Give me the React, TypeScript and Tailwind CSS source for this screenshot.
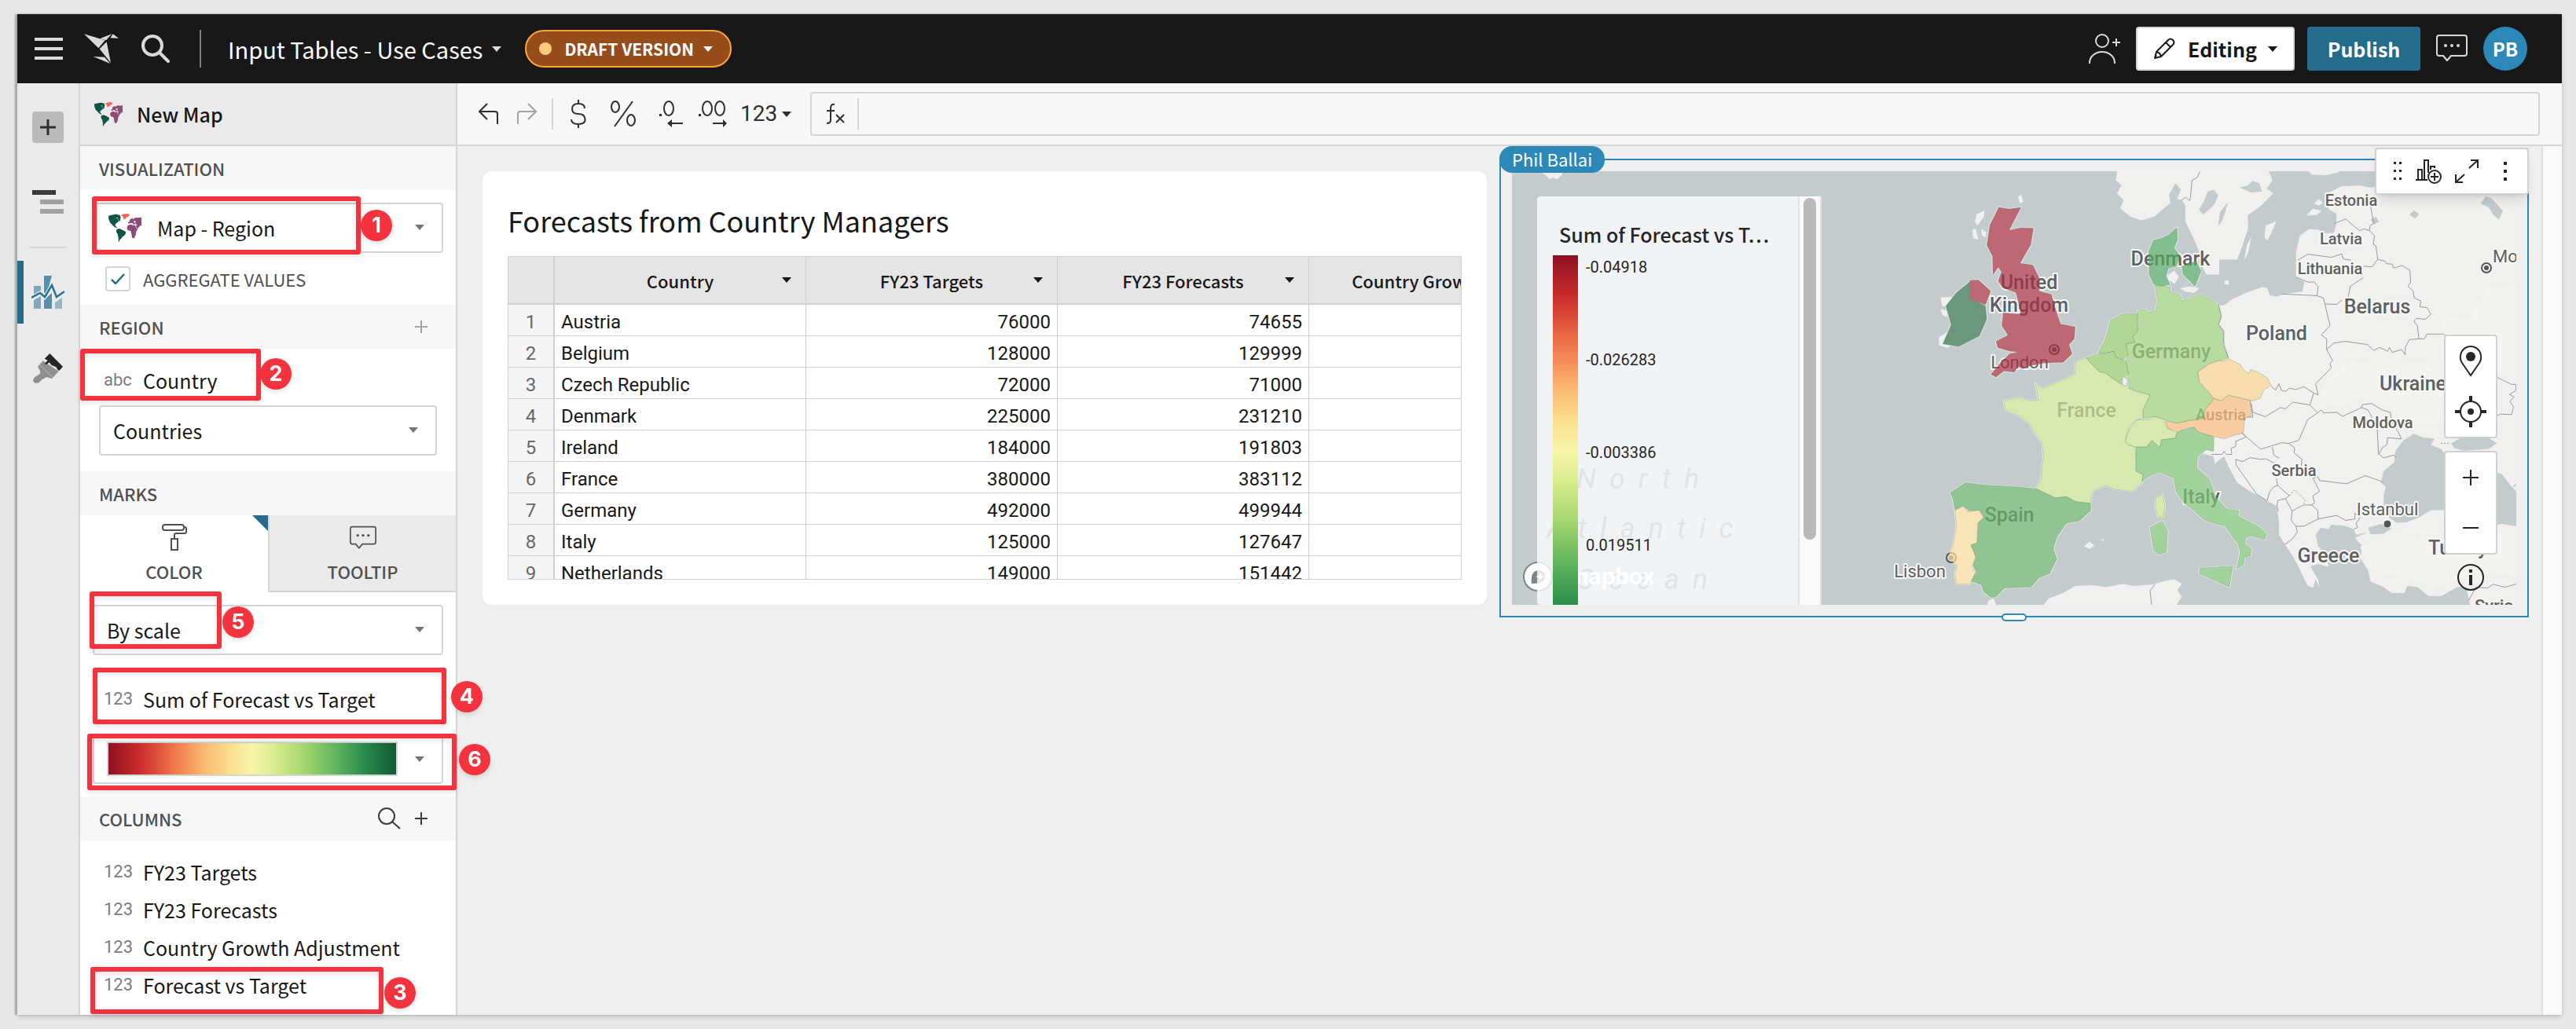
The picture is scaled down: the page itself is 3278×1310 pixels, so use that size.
import React, { useState } from "react";

const SANS = "font-['Noto_Sans_CJK_SC','Noto_Sans',sans-serif]";

/* ---------- icons ---------- */

function Caret({ className = "" }: { className?: string }) {
  return (
    <svg viewBox="0 0 12 7" className={`h-[7px] w-3 shrink-0 ${className}`} fill="currentColor" aria-hidden="true">
      <path d="M0 0h12L6 7z" />
    </svg>
  );
}

function WorldIcon({ className }: { className: string }) {
  return (
    <svg viewBox="0 0 126 108" className={`shrink-0 ${className}`} aria-hidden="true">
      <path fill="#0f5445" d="M0 8L10 6 18 4 30 2 44 6 47 16 44 22 46 26 38 30 34 34 28 38 25 44 30 50 34 55 24 52 14 42 6 34 1 22z" />
      <path fill="#fff" d="M30 16l6-2-2 6zM36 24l4-2-1 4z" />
      <path fill="#0f5445" d="M31 60L42 57 54 62 67 70 64 80 54 88 48 96 42 100 42 107 38 105 38 92 36 80 30 70z" />
      <path fill="#fb6050" d="M47 7L56 2 70 0 81 2 78 10 68 15 62 22 56 18 56 11z" />
      <path fill="#8d4a76" d="M76 38L76 31 82 30 80 24 88 18 96 20 104 14 113 16 126 14 126 48 121 44 118 50 110 58 104 48 110 42 100 40 96 42 92 36 84 36z" />
      <path fill="#fff" d="M94 31l8-3 4 5-8 1zM98 37l8 1-2 3z" />
      <path fill="#8d4a76" d="M70 54L74 45 84 41 94 44 102 44 106 56 113 57 106 68 104 82 98 94 90 92 88 78 85 66 74 64z" />
    </svg>
  );
}

function ChatIcon({ className }: { className: string }) {
  return (
    <svg viewBox="0 0 40 36" className={`shrink-0 ${className}`} fill="none" stroke="currentColor" strokeWidth="2" aria-hidden="true">
      <path d="M4 1h32a3 3 0 0 1 3 3v20a3 3 0 0 1-3 3H19l-5 6-5-6H4a3 3 0 0 1-3-3V4a3 3 0 0 1 3-3z" strokeLinejoin="round" />
      <g fill="currentColor" stroke="none">
        <circle cx="12" cy="14" r="2" />
        <circle cx="20" cy="14" r="2" />
        <circle cx="28" cy="14" r="2" />
      </g>
    </svg>
  );
}

function PlusIcon() {
  return (
    <svg viewBox="0 0 16 16" className="size-4 shrink-0" stroke="currentColor" strokeWidth="2" aria-hidden="true">
      <path d="M8 0v16M0 8h16" />
    </svg>
  );
}

/* ---------- top bar ---------- */

function TopBar() {
  return (
    <header className="flex h-[88px] shrink-0 items-center bg-[#181818] pr-11 pl-[22px] text-white">
      <button aria-label="Menu" className="flex w-9 flex-col gap-2">
        <span className="h-1 bg-[#d9d9d9]" />
        <span className="h-1 bg-[#d9d9d9]" />
        <span className="h-1 bg-[#d9d9d9]" />
      </button>
      <button aria-label="Home" className="ml-[26px]">
        <svg viewBox="258 66 138 120" className="h-10 w-[46px]" fill="#d9d9d9">
          <path d="M261 70l80 24-25 30z" />
          <path d="M321 88l45-18-21 24z" />
          <path d="M371 70l22 16-32-1z" />
          <path d="M320 127l27-27 16 80z" />
          <path d="M296 156l43 2 22 25z" />
        </svg>
      </button>
      <button aria-label="Search" className="ml-7">
        <svg viewBox="0 0 36 36" className="size-9" fill="none" stroke="#d9d9d9" strokeWidth="4">
          <circle cx="14" cy="14" r="12" />
          <path d="M23 23l11 11" strokeLinecap="round" />
        </svg>
      </button>
      <div className="ml-[38px] h-12 w-0.5 bg-[#7d7d7d]" />
      <button className="ml-[34px] flex items-center gap-3 text-[29px] leading-10 whitespace-nowrap">
        Input Tables - Use Cases
        <Caret className="text-[#d9d9d9]" />
      </button>
      <button className="ml-[30px] flex h-12 items-center rounded-full border-2 border-[#fba636] bg-[#964d1b] pr-[22px] pl-4 text-[21px] leading-8 font-bold whitespace-nowrap">
        <span className="mr-4 size-4 rounded-full bg-[#fecb7e]" />
        DRAFT VERSION
        <Caret className="ml-3" />
      </button>
      <div className="flex-1" />
      <button aria-label="Share" className="mr-5">
        <svg viewBox="0 0 40 38" className="h-[38px] w-10" fill="none" stroke="#d9d9d9" strokeWidth="2">
          <circle cx="17" cy="9" r="8" />
          <path d="M1 38v-1a16 14 0 0 1 32 0v1M30 11h10M35 6v10" />
        </svg>
      </button>
      <button className="flex h-14 w-[202px] items-center justify-center rounded border-2 border-[#d5d5d5] bg-white text-[25px] leading-9 font-bold text-[#181818]">
        <svg viewBox="0 0 28 28" className="mr-4 size-7" fill="none" stroke="currentColor" strokeWidth="2" strokeLinejoin="round" aria-hidden="true">
          <path d="M2 26l2-8L19 3q3-3 6 0t0 6L10 24zM16 6l6 6M4 18q5 1 6 6M2 26l2-4" />
        </svg>
        Editing
        <Caret className="ml-3.5" />
      </button>
      <button className="ml-4 h-14 w-36 rounded bg-[#256b8b] text-[25px] leading-9 font-bold">Publish</button>
      <button aria-label="Comments" className="ml-5 text-[#d9d9d9]">
        <ChatIcon className="h-9 w-10" />
      </button>
      <button className="ml-5 size-14 rounded-full bg-[#2c88b7] text-2xl font-bold">PB</button>
    </header>
  );
}

/* ---------- rail ---------- */

function Rail() {
  return (
    <nav className="flex w-20 shrink-0 flex-col items-center border-r-2 border-[#d5d5d5] bg-[#eaeaea] pt-9">
      <button aria-label="Add element" className="flex size-10 items-center justify-center rounded bg-[#bababa]">
        <svg viewBox="0 0 20 20" className="size-5" stroke="#2f2f2f" strokeWidth="3">
          <path d="M10 0v20M0 10h20" />
        </svg>
      </button>
      <button aria-label="Page outline" className="mt-[60px]">
        <svg viewBox="0 0 40 30" className="h-[30px] w-10">
          <path fill="#3b3b3b" d="M0 0h30v6H0z" />
          <path fill="#a2a2a2" d="M10 12h30v6H10zM10 24h30v6H10z" />
        </svg>
      </button>
      <div className="mt-[42px] h-0.5 w-[46px] bg-[#d5d5d5]" />
      <button aria-label="Element properties" className="mt-4 flex h-20 w-full items-center justify-center border-l-8 border-[#256b8b] pr-2">
        <svg viewBox="0 0 42 42" className="size-[42px]">
          <path fill="#80a8bd" d="M3 13h9v10l-9 4zM3 31l9-5v16H3z" />
          <path fill="#578fa9" d="M16 0h10l-4 14-4 8h-2zM16 31l10-9v20H16z" />
          <path fill="#97b6c4" d="M30 34l9-6v14h-9z" />
          <path fill="none" stroke="#eaeaea" strokeWidth="5" d="M0 28l11-6 6 5 9-14 6 14 10-7" />
          <path fill="none" stroke="#2a7198" strokeWidth="2.5" d="M0 28l11-6 6 5 9-15 6 15 10-7" />
        </svg>
      </button>
      <button aria-label="Theme" className="mt-[38px]">
        <svg viewBox="0 0 114 114" className="size-[38px]">
          <path fill="#8f8f8f" d="M18 50L38 28 98 68 72 96 52 90 34 100 22 112 8 114 0 104 4 92 26 78 28 68z" />
          <path fill="#262626" d="M64 0L114 50 100 66 94 62 88 52 70 44 62 34 52 42 44 40 56 26 44 20z" />
          <path stroke="#d5d5d5" strokeWidth="2" d="M26 44L76 92" />
        </svg>
      </button>
    </nav>
  );
}

/* ---------- side panel ---------- */

function SectionHeader({ title, children }: { title: string; children?: React.ReactNode }) {
  return (
    <div className="flex h-14 shrink-0 items-center bg-[#f7f7f7] pr-9 pl-6 text-[22px] leading-8 font-medium text-[#505050]">
      <h2>{title}</h2>
      <div className="ml-auto flex items-center gap-[18px] text-[#3b3b3b]">{children}</div>
    </div>
  );
}

function SelectBox({ label, options, className = "" }: { label: string; options: string[]; className?: string }) {
  return (
    <div className="relative">
      <select
        aria-label={label}
        className={`block h-16 w-full appearance-none rounded border-2 border-[#d5d5d5] bg-white text-[25px] leading-9 text-[#181818] ${className}`}
      >
        {options.map((o) => (
          <option key={o}>{o}</option>
        ))}
      </select>
      <Caret className="pointer-events-none absolute top-7 right-6 text-[#757575]" />
    </div>
  );
}

function FieldRow({ type, name }: { type: string; name: string }) {
  return (
    <button className="flex h-12 w-full items-center text-left">
      <span className="w-[50px] font-[Roboto,sans-serif] text-[22px] leading-8 text-[#7d7d7d]">{type}</span>
      <span className="text-[25px] leading-9 text-[#181818]">{name}</span>
    </button>
  );
}

function Callout({ n, box, badge }: { n: number; box: string; badge: string }) {
  return (
    <>
      <div className={`pointer-events-none absolute rounded-[3px] border-[6px] border-[#f5333f] drop-shadow-md ${box}`} />
      <div className={`pointer-events-none absolute flex size-10 items-center justify-center rounded-full bg-[#f5333f] font-[Inter,sans-serif] text-[27px] leading-8 font-bold text-white drop-shadow-md ${badge}`}>
        {n}
      </div>
    </>
  );
}

function SidePanel() {
  const [aggregate, setAggregate] = useState(true);
  return (
    <aside className="relative flex w-[480px] shrink-0 flex-col border-r-2 border-[#d5d5d5] bg-white">
      <div className="flex h-20 shrink-0 items-center gap-[18px] border-b-2 border-[#d5d5d5] bg-[#eaeaea] pl-[18px]">
        <WorldIcon className="h-[31px] w-9" />
        <h1 className="text-[25px] leading-9 font-medium text-[#181818]">New Map</h1>
      </div>

      <SectionHeader title="VISUALIZATION" />
      <div className="px-4 pt-4 pb-[17px]">
        <div className="relative">
          <SelectBox label="Visualization type" options={["Map - Region", "Map - Point"]} className="pl-20" />
          <WorldIcon className="pointer-events-none absolute top-3.5 left-5 h-9 w-[42px]" />
        </div>
        <label className="mt-[17px] flex items-center gap-4 pl-4 text-[22px] leading-8 text-[#505050]">
          <span className="relative size-8">
            <input
              type="checkbox"
              checked={aggregate}
              onChange={(e) => setAggregate(e.target.checked)}
              className="block size-8 appearance-none rounded border-2 border-[#d5d5d5] bg-white"
            />
            {aggregate && (
              <svg viewBox="0 0 18 14" className="pointer-events-none absolute top-[9px] left-[7px] h-3.5 w-[18px]" fill="none" stroke="#256b8b" strokeWidth="2.5">
                <path d="M1 8l5 5L17 1" />
              </svg>
            )}
          </span>
          AGGREGATE VALUES
        </label>
      </div>

      <SectionHeader title="REGION">
        <button aria-label="Add region" className="text-[#a2a2a2]">
          <PlusIcon />
        </button>
      </SectionHeader>
      <div className="px-6 pt-4 pb-5">
        <div className="pb-2 pl-1.5">
          <FieldRow type="abc" name="Country" />
        </div>
        <SelectBox label="Region type" options={["Countries", "States"]} className="pl-4" />
      </div>

      <SectionHeader title="MARKS" />
      <div role="tablist" className="grid h-[98px] shrink-0 grid-cols-2 text-[22px] leading-8 font-medium text-[#505050]">
        <button role="tab" aria-selected="true" className="relative flex flex-col items-center gap-2.5 pt-[11px]">
          <svg viewBox="0 0 32 34" className="h-[34px] w-8" fill="none" stroke="#505050" strokeWidth="2" aria-hidden="true">
            <rect x="1" y="1" width="27" height="7" rx="3" />
            <path d="M28 4h1q2 0 2 2v4q0 2-2 2H18q-2 0-2 2v5M12 19h8v14h-8z" />
          </svg>
          COLOR
          <svg viewBox="0 0 20 20" className="absolute top-0 right-0 size-5" fill="#256b8b" aria-hidden="true">
            <path d="M0 0h20v20z" />
          </svg>
        </button>
        <button role="tab" aria-selected="false" className="flex flex-col items-center gap-2.5 border-b-2 border-l-2 border-[#d5d5d5] bg-[#eaeaea] pt-[13px]">
          <ChatIcon className="h-8 w-[34px]" />
          TOOLTIP
        </button>
      </div>
      <div className="px-4 py-4">
        <SelectBox label="Color mode" options={["By scale", "By category"]} className="pl-4" />
        <div className="pt-8 pb-5 pl-3.5">
          <FieldRow type="123" name="Sum of Forecast vs Target" />
        </div>
        <button aria-label="Color scale" aria-haspopup="listbox" className="flex h-16 w-full items-center justify-between rounded border-2 border-[#d5d5d5] pr-[22px] pl-4">
          <span className="h-11 w-[370px] border-2 border-[#d5d5d5] bg-[linear-gradient(90deg,#8f1023,#cb2d2c_11%,#ef7148_22%,#fbb871_33%,#fade8c_42%,#f7f5a9_50%,#d3ea88_59%,#a0d36c_69%,#5bb25d_80%,#25874a_90%,#125a33)]" />
          <Caret className="text-[#757575]" />
        </button>
      </div>

      <SectionHeader title="COLUMNS">
        <button aria-label="Search columns">
          <svg viewBox="0 0 30 28" className="h-7 w-[30px]" fill="none" stroke="currentColor" strokeWidth="2">
            <circle cx="12" cy="11" r="10" />
            <path d="M19 18l10 9" />
          </svg>
        </button>
        <button aria-label="Add column">
          <PlusIcon />
        </button>
      </SectionHeader>
      <ul className="pt-4 pl-[30px]">
        {["FY23 Targets", "FY23 Forecasts", "Country Growth Adjustment", "Forecast vs Target"].map((name) => (
          <li key={name}>
            <FieldRow type="123" name={name} />
          </li>
        ))}
      </ul>

      <Callout n={1} box="top-36 left-[15px] h-[74px] w-[342px]" badge="top-[161px] left-[357px]" />
      <Callout n={2} box="top-[338px] left-0 h-[66px] w-[230px]" badge="top-[350px] left-[229px]" />
      <Callout n={5} box="top-[647px] left-3 h-[73px] w-[168px]" badge="top-[666px] left-[181px]" />
      <Callout n={4} box="top-[744px] left-4 h-[72px] w-[450px]" badge="top-[761px] left-[472px]" />
      <Callout n={6} box="top-[828px] left-[9px] h-[72px] w-[470px]" badge="top-[841px] left-[482px]" />
      <Callout n={3} box="top-[1125px] left-[13px] h-[60px] w-[373px]" badge="top-[1138px] left-[387px]" />
    </aside>
  );
}

/* ---------- format toolbar ---------- */

function FormatBar() {
  return (
    <div className="flex h-20 shrink-0 items-center border-b-2 border-[#d5d5d5] bg-[#f7f7f7] pr-7 pl-[26px] text-[#2f2f2f]">
      <button aria-label="Undo">
        <svg viewBox="0 0 26 28" className="h-7 w-[26px]" fill="none" stroke="currentColor" strokeWidth="2">
          <path d="M12 1L2 11l10 10M2 11h20q3 0 3 3v13" />
        </svg>
      </button>
      <button aria-label="Redo" className="ml-6 text-[#a2a2a2]">
        <svg viewBox="0 0 26 28" className="h-7 w-[26px]" fill="none" stroke="currentColor" strokeWidth="2">
          <path d="M14 1l10 10-10 10M24 11H4q-3 0-3 3v13" />
        </svg>
      </button>
      <div className="ml-[18px] h-10 w-0.5 bg-[#d5d5d5]" />
      <button aria-label="Currency" className="ml-[22px]">
        <svg viewBox="0 0 20 36" className="h-9 w-5" fill="none" stroke="currentColor" strokeWidth="2">
          <path d="M10 0v5M10 31v5M18 11q0-6-8-6t-8 6.500 8 6.500 8.500 6.500-8.500 6.500-9-6" />
        </svg>
      </button>
      <button aria-label="Percent" className="ml-[30px]">
        <svg viewBox="0 0 34 34" className="size-[34px]" fill="none" stroke="currentColor" strokeWidth="2">
          <ellipse cx="7" cy="8" rx="5" ry="7" />
          <ellipse cx="27" cy="25" rx="5" ry="7" />
          <path d="M29 1L6 33" />
        </svg>
      </button>
      <button aria-label="Decrease decimals" className="ml-7">
        <svg viewBox="0 0 32 34" className="h-[34px] w-8" fill="none" stroke="currentColor" strokeWidth="2">
          <ellipse cx="13" cy="10" rx="6" ry="9" />
          <path d="M14 29h17" />
          <path d="M17 24v10l-6-5zM1 17h3v3H1z" fill="currentColor" stroke="none" />
        </svg>
      </button>
      <button aria-label="Increase decimals" className="ml-[18px]">
        <svg viewBox="0 0 38 34" className="h-[34px] w-[38px]" fill="none" stroke="currentColor" strokeWidth="2">
          <ellipse cx="12" cy="10" rx="6" ry="9" />
          <ellipse cx="28" cy="10" rx="6" ry="9" />
          <path d="M19 29h14" />
          <path d="M32 24v10l5-5zM1 17h3v3H1z" fill="currentColor" stroke="none" />
        </svg>
      </button>
      <button className="ml-4 flex items-center gap-1.5 font-[Roboto,sans-serif] text-[28px] leading-8">
        123
        <Caret />
      </button>
      <div className="ml-6 flex h-14 flex-1 items-center rounded border-2 border-[#d5d5d5] pl-[18px]">
        <svg viewBox="0 0 24 28" className="h-7 w-6" fill="none" stroke="currentColor" strokeWidth="2" aria-hidden="true">
          <path d="M11 2q-5-1-5 5v15q0 4-5 4M1 10h10M13 15l10 10M23 15L13 25" />
        </svg>
        <div className="ml-4 h-10 w-0.5 bg-[#d5d5d5]" />
        <input aria-label="Formula" className="h-full flex-1 bg-transparent px-4 text-2xl outline-none" />
      </div>
    </div>
  );
}

/* ---------- table ---------- */

const ROWS: [string, number, number][] = [
  ["Austria", 76000, 74655],
  ["Belgium", 128000, 129999],
  ["Czech Republic", 72000, 71000],
  ["Denmark", 225000, 231210],
  ["Ireland", 184000, 191803],
  ["France", 380000, 383112],
  ["Germany", 492000, 499944],
  ["Italy", 125000, 127647],
  ["Netherlands", 149000, 151442],
];

function ForecastCard() {
  return (
    <section className="h-[552px] rounded-xl bg-white p-8">
      <h2 className="flex h-[76px] items-center pb-4 text-[36px] leading-[52px] text-[#181818]">Forecasts from Country Managers</h2>
      <div className="h-[412px] overflow-hidden border border-[#d0d0d0]">
        <table className="w-[1339px] table-fixed border-separate border-spacing-0">
          <colgroup>
            <col className="w-[59px]" />
            <col className="w-80" />
            <col className="w-80" />
            <col className="w-80" />
            <col className="w-80" />
          </colgroup>
          <thead>
            <tr className="h-[61px] bg-[#e5e5e5] text-[22px] leading-8 text-[#181818]">
              <th className="border-r-2 border-b-2 border-[#d0d0d0]" />
              {["Country", "FY23 Targets", "FY23 Forecasts", "Country Growth A…"].map((h) => (
                <th key={h} className="relative border-r border-b-2 border-[#d0d0d0] p-0 text-center font-medium">
                  {h}
                  <Caret className="absolute top-[26px] right-[18px]" />
                </th>
              ))}
            </tr>
          </thead>
          <tbody className="font-[Roboto,sans-serif] text-2xl leading-8 text-[#181818]">
            {ROWS.map(([name, target, forecast], i) => (
              <tr key={name} className="h-10">
                <td className="border-r-2 border-b border-[#d0d0d0] bg-[#f5f5f5] p-0 pt-1 text-center text-[#686868]">{i + 1}</td>
                <td className="border-r border-b border-[#d0d0d0] px-2 pt-1 pb-0">{name}</td>
                <td className="border-r border-b border-[#d0d0d0] px-2 pt-1 pb-0 text-right">{target}</td>
                <td className="border-r border-b border-[#d0d0d0] px-2 pt-1 pb-0 text-right">{forecast}</td>
                <td className="border-b border-[#d0d0d0] p-0" />
              </tr>
            ))}
          </tbody>
        </table>
      </div>
    </section>
  );
}

/* ---------- map ---------- */

const REGIONS: [string, string][] = [
  ["#a82d42", "M256 247L280 252 307 247 280 316 306 309 335 310 329 360 305 416 334 422 348 460 348 500 376 510 384 550 397 600 430 608 428 645 416 662 423 690 403 716 360 718 330 725 310 735 300 728 292 746 268 742 250 761 238 752 262 715 280 690 300 684 280 682 254 672 250 652 277 634 263 605 266 566 307 570 300 530 295 505 265 490 255 470 262 442 255 428 243 452 242 395 229 362 236 300z"],
  ["#a82d42", "M190 468L210 466 238 500 226 542 205 530 190 528z"],
  ["#31704e", "M190 472L190 528 205 530 226 545 229 585 212 637 165 668 129 660 148 602 136 545 160 505z"],
  ["#53aa68", "M608 346L622 342 640 332 661 308 662 345 655 370 668 395 660 425 642 430 636 455 645 480 625 486 608 480 598 450 597 380z"],
  ["#53aa68", "M672 425L705 410 716 440 702 486 675 450z"],
  ["#94cc70", "M510 590L535 570 572 568 570 590 572 620 560 640 566 655 545 660 550 690 540 708 522 700 518 683 500 688 482 687 500 640z"],
  ["#94cc70", "M455 702L482 690 500 688 518 682 522 700 545 712 552 750 536 768 536 782 515 765 498 748 485 745 470 725z"],
  ["#9fd27f", "M610 482L646 488 645 503 668 510 672 530 685 525 712 510 745 530 755 545 762 575 756 602 768 625 766 665 778 702 755 712 735 720 708 745 712 775 745 825 738 840 724 860 722 885 690 892 660 900 635 890 612 880 585 885 584 860 600 815 552 795 550 745 545 712 550 690 545 660 566 655 560 640 572 620 572 560 590 555 595 565 612 560 618 530z"],
  ["#cde596", "M430 715L455 702 470 725 485 745 498 748 515 765 536 782 560 800 600 815 584 860 584 885 570 890 555 905 543 955 550 965 565 970 568 1000 568 1045 584 1055 582 1080 560 1106 520 1100 500 1088 470 1105 463 1142 432 1138 410 1122 385 1126 341 1098 352 1070 358 1000 355 960 335 925 325 900 305 880 272 862 267 832 305 822 325 832 346 830 340 780 355 795 400 770 430 752z"],
  ["#cde596", "M613 1128L628 1115 634 1150 630 1185 618 1185 612 1150z"],
  ["#cde596", "M543 955L550 925 570 890 600 888 612 880 632 888 640 915 660 930 658 945 640 948 626 950 622 975 605 952 592 972 568 972 550 965z"],
  ["#80c477", "M568 972L592 972 605 952 622 975 626 950 658 945 662 925 700 912 710 925 745 942 744 985 728 980 708 1000 706 1035 735 1070 750 1125 775 1160 802 1165 800 1180 850 1215 865 1235 860 1252 830 1240 818 1245 815 1262 830 1280 828 1302 815 1305 812 1330 797 1340 805 1290 800 1265 785 1240 770 1210 750 1205 722 1192 700 1165 680 1145 660 1110 653 1065 620 1048 598 1060 582 1076 584 1055 568 1045z"],
  ["#80c477", "M714 1338L788 1332 780 1396 712 1355z"],
  ["#80c477", "M600 1215L628 1196 640 1225 637 1290 620 1297 608 1285z"],
  ["#66b26c", "M181 1079L215 1086 300 1093 341 1098 385 1126 410 1122 432 1138 465 1142 465 1165 440 1195 410 1202 388 1245 380 1280 388 1310 372 1355 348 1368 330 1395 270 1398 250 1425 238 1427 222 1410 216 1388 193 1378 205 1350 198 1330 204 1305 193 1268 207 1262 210 1200 222 1185 212 1163 188 1165 175 1150 157 1163 152 1130 146 1110z"],
  ["#fcdea0", "M157 1163L175 1150 185 1168 212 1163 222 1185 208 1202 207 1262 193 1268 204 1305 196 1330 202 1355 190 1388 160 1386 156 1355 162 1330 140 1308 152 1270 160 1215z"],
  ["#fcbe82", "M745 825L762 832 778 815 828 832 830 880 815 885 812 930 795 935 768 947 745 940 710 928 700 912 680 915 665 928 640 915 636 892 660 900 690 892 722 885 724 860z"],
  ["#f9d493", "M708 745L735 720 755 710 768 712 778 705 805 722 812 738 825 750 828 738 845 745 866 762 875 785 858 800 850 825 832 832 778 815 762 832 745 825 712 775z"],
];

const LAND_WEST =
  "M525 138L522 165 535 180 525 205 540 225 532 250 555 275 580 286 610 275 640 240 665 222 672 225 680 240 680 290 695 330 705 360 718 400 720 430 728 450 757 450 757 405 798 405 808 370 823 310 822 270 850 245 880 205 865 190 878 165 870 138z" +
  "M358 1449L370 1430 400 1415 430 1392 470 1390 500 1396 540 1386 560 1392 605 1388 640 1375 655 1372 672 1385 662 1405 672 1425 660 1449z" +
  "M230 1449L233 1436 245 1430 250 1449zM450 1272L462 1258 474 1270 463 1280zM486 1252L496 1250 494 1256z" +
  "M300 215L307 208 312 230 304 236zM202 290L206 268 224 256 222 276 208 302zM196 315L204 312 210 345 198 340zM216 312L228 322 226 338 218 332z" +
  "M124 520L148 518 150 535 128 548zM124 555L140 560 138 580 128 572zM120 640L150 615 160 655 140 672 120 664z" +
  "M860 338L863 302 886 290 880 312 866 348zM814 408L820 360 830 336 824 380zM955 272L970 250 990 258 978 270zM972 236L984 222 992 234 984 242z" +
  "M640 452L655 438 666 458 656 478 641 466zM668 492L690 486 712 492 700 506 680 502zM768 470L778 468 780 480 770 480z" +
  "M960 138L968 148 1000 150 1030 140 1028 138z";

const LAND_EAST =
  "M0 470L80 500 150 480 215 510 240 510 270 490 330 465 385 448 405 450 415 475 440 480 475 470 540 462 547 430 515 412 515 330 530 270 565 248 600 250 625 262 660 260 668 235 670 195 640 180 632 145 635 125 690 100 760 98 800 105 830 100 860 60 1000 50 1356 50 1356 1541 1180 1541 1165 1480 1130 1480 1070 1510 1020 1510 980 1480 940 1475 930 1500 880 1500 850 1480 800 1460 790 1420 760 1380 770 1340 740 1310 790 1290 745 1300 735 1280 700 1268 650 1265 640 1280 610 1275 590 1300 600 1340 628 1370 640 1410 600 1400 570 1408 600 1455 605 1482 590 1452 580 1482 560 1475 540 1440 520 1400 500 1370 475 1335 450 1300 450 1250 440 1200 400 1180 340 1150 290 1120 255 1060 240 1030 205 1055 200 1030 140 1015 100 900z";

const LAKES =
  "M145 180L165 150 178 118 200 112 218 130 205 160 185 180 160 198zM218 236L225 190 255 155 248 180 232 222z" +
  "M300 105L330 98 350 82 375 90 386 118 345 122zM948 198L965 184 985 196 970 212zM1220 160L1240 135 1262 142 1305 185 1290 214 1270 200 1250 172z" +
  "M800 215L820 205 832 222 812 232zM55 90L75 110 60 150 40 180 30 130z" +
  "M840 1120L850 1080 890 1050 895 1010 925 975 965 952 1000 965 1045 968 1030 990 1070 1005 1110 1060 1160 1090 1200 1050 1260 1080 1300 1090 1330 1125 1356 1150 1356 1270 1300 1262 1240 1275 1180 1250 1090 1215 1030 1215 985 1240 940 1256 900 1258 870 1240 850 1200 850 1160 858 1135z" +
  "M1108 985L1140 968 1250 966 1282 985 1250 1004 1160 1010 1120 1002zM790 1275L840 1262 880 1278 850 1296 800 1298z";

const TINTS =
  "M1356 440L1250 452 1195 520 1190 560 1090 545 1060 600 1080 760 1160 800 1260 740 1356 760z" +
  "M640 760L720 700 860 720 1000 700 1080 760 1060 920 940 920 880 860 760 830 680 860 600 840z" +
  "M760 1340L900 1290 1040 1330 1200 1290 1356 1300 1356 1440 1200 1430 1060 1480 900 1440 800 1420z";

const BORDERS =
  "M148 50L138 70 118 80 112 140 108 150 95 138 78 148M662 228L705 213 757 253 775 247 795 253 815 270 810 300 820 305 827 352M800 170L812 228 798 236 795 253" +
  "M522 355L560 334 650 345 690 333 695 350 725 355M827 352L805 378 775 375M772 415L722 445 715 480M690 492L670 507 625 505" +
  "M515 413L560 430 585 430 600 445 595 477M462 471L595 477 620 485 645 580 612 612 632 625 632 662" +
  "M827 352L855 358 860 367 882 368 888 382 920 373 950 390 953 430 943 445 962 460 967 485 992 495 988 515 1015 518 1030 540 1010 558 975 555 965 565 978 580 985 625 948 628 932 655 932 680 918 662 882 672 872 655 865 668 835 655 812 665 788 645 702 634 660 640 632 662" +
  "M985 625L1005 626 1015 609 1078 609 1100 625M1283 758L1338 782 1355 782 1355 803 1330 817 1348 825 1332 840 1346 860 1338 886 1295 884 1283 890" +
  "M632 662L655 700 645 710 650 725 590 780 600 818 583 812 545 790 515 800 490 795 475 806 460 803 450 780 437 802 420 788" +
  "M583 812L568 853 503 843 475 866 455 862 398 893 350 878 340 838M568 853L598 880 560 903 525 975 487 985 460 983 380 1005 310 950" +
  "M598 880L612 870 620 880 670 878 693 892 765 862M765 862L768 852 803 848 845 870 875 878 880 910 905 945 918 970 865 965 862 990 845 1000 830 1023M765 862L790 870 825 930 830 1020 850 1035 890 1025 897 1035" +
  "M598 1100L605 1113 708 1124 780 1096 848 1118M425 998L430 1025 450 1035M487 985L510 1000 508 1018 538 1040 535 1065M598 1100L580 1105 605 1150 580 1165 585 1190 575 1197 545 1197" +
  "M430 1052L400 1038 380 1040 340 1034 310 1048 285 1040 287 1060 365 1160 405 1182 415 1150 430 1135 445 1130 440 1105M445 1130L490 1165 475 1175 445 1182 443 1200 447 1220" +
  "M475 1175L500 1218 525 1205 545 1197M500 1218L497 1250 515 1270 545 1270 600 1245 598 1215 575 1197M515 1270L520 1290 500 1315 472 1333M600 1245L670 1233 705 1250 740 1245 740 1225 760 1240 745 1260 750 1275 735 1280" +
  "M192 1023L232 1023 240 1013 250 1023 270 1023 268 1002 285 995 285 978 320 965M305 945L325 965M345 850L350 895 320 893" +
  "M1175 1525L1190 1500 1202 1480 1245 1483 1268 1470 1312 1480 1356 1469M220 508L230 550 218 575 238 597 240 645 257 690M1345 1135L1356 1125";

const LABELS: { t: string; x: number; y: number; s: string; a?: "start" | "middle" }[] = [
  { t: "Estonia", x: 1068, y: 44, s: "text-[20px] font-medium" },
  { t: "Latvia", x: 1055, y: 93, s: "text-[20px] font-medium" },
  { t: "Lithuania", x: 1041, y: 131, s: "text-[20px] font-medium" },
  { t: "Belarus", x: 1101, y: 181, s: "text-[25px] font-medium" },
  { t: "Poland", x: 973, y: 215, s: "text-[25px] font-medium" },
  { t: "Mo", x: 1248, y: 116, s: "text-[22px]", a: "start" },
  { t: "Ukraine", x: 1104, y: 279, s: "text-[25px] font-medium", a: "start" },
  { t: "Moldova", x: 1108, y: 327, s: "text-[20px] font-medium" },
  { t: "Serbia", x: 995, y: 388, s: "text-[20px] font-medium" },
  { t: "Istanbul", x: 1114, y: 438, s: "text-[22px]" },
  { t: "Greece", x: 1039, y: 498, s: "text-[25px] font-medium" },
  { t: "Turkey", x: 1166, y: 488, s: "text-[25px] font-medium", a: "start" },
  { t: "Syria", x: 1225, y: 561, s: "text-[22px] font-medium", a: "start" },
  { t: "Italy", x: 877, y: 423, s: "text-[25px] font-medium" },
  { t: "Germany", x: 839, y: 238, s: "text-[25px] font-medium" },
  { t: "France", x: 731, y: 313, s: "text-[25px] font-medium" },
  { t: "Spain", x: 633, y: 446, s: "text-[25px] font-medium" },
  { t: "Lisbon", x: 519, y: 517, s: "text-[22px]" },
  { t: "London", x: 646, y: 251, s: "text-[22px]" },
  { t: "United", x: 658, y: 150, s: "text-[25px] font-medium" },
  { t: "Kingdom", x: 658, y: 179, s: "text-[25px] font-medium" },
  { t: "Denmark", x: 838, y: 120, s: "text-[25px] font-medium" },
  { t: "Austria", x: 902, y: 317, s: "text-[20px] font-medium" },
];

const CAPITALS: [number, number][] = [
  [1240, 123],
  [559, 492],
  [690, 227],
];

function EuropeMap() {
  return (
    <svg viewBox="0 0 1278 552" preserveAspectRatio="xMidYMid slice" className="absolute inset-0 h-full w-full font-[Roboto,sans-serif]" role="img" aria-label="Map of Europe coloured by forecast vs target">
      <rect width="1278" height="552" fill="#c3cbcd" />
      <path d="M34 0l8 4 6 6 4-2 6 2 6-6V0z" fill="#f1f1ef" />
      <g fill="#f0f0ef">
        <g transform="matrix(.56 0 0 .4209 476 -58)" stroke="#f0f0ef" strokeWidth="4">
          {REGIONS.map(([, d]) => (
            <path key={d} d={d} />
          ))}
          <path d={LAND_WEST} stroke="none" />
        </g>
        <g transform="matrix(.3333 0 0 .37 826 -18)">
          <path d={LAND_EAST} />
          <path d={TINTS} fill="#f3f4ef" />
          <path d={LAKES} fill="#c3cbcd" />
          <path d={BORDERS} fill="none" stroke="#9a9a9a" vectorEffect="non-scaling-stroke" />
          <path d="M490 1165L510 1145 550 1180 545 1195M1068 985L1105 985" fill="none" stroke="#9a9a9a" strokeDasharray="2 2" vectorEffect="non-scaling-stroke" />
        </g>
      </g>
      <path d="M818 526l-6 8 2 18" fill="none" stroke="#9a9a9a" />
      <g fill="#555" stroke="#555">
        {CAPITALS.map(([x, y]) => (
          <g key={x}>
            <circle cx={x} cy={y} r="6" fill="none" strokeWidth="2" />
            <circle cx={x} cy={y} r="3" stroke="none" />
          </g>
        ))}
        <circle cx="1114" cy="449" r="4" />
      </g>
      {LABELS.map(({ t, x, y, s, a = "middle" }) => (
        <text key={t} x={x} y={y} textAnchor={a} className={s} fill="#606060" stroke="#f7f7f6" strokeWidth="4" strokeLinejoin="round" paintOrder="stroke">
          {t}
        </text>
      ))}
      <g transform="matrix(.56 0 0 .4209 476 -58)" fillOpacity=".7">
        {REGIONS.map(([fill, d]) => (
          <path key={d} d={d} fill={fill} stroke="#6b8f68" strokeOpacity=".35" vectorEffect="non-scaling-stroke" />
        ))}
        <path d="M538 758L549 768 546 788 537 782z" fill="#f0f0ef" fillOpacity="1" stroke="#a9a9a9" />
      </g>
      <g fill="#75838a" className="text-[36px] tracking-[17px] italic">
        <text x="82" y="404">North</text>
        <text x="44" y="467">Atlantic</text>
        <text x="82" y="532">Ocean</text>
      </g>
      <g>
        <circle cx="33" cy="516" r="18" fill="#fff" stroke="#7d8587" strokeWidth="2" />
        <path d="M25 525q-2-16 9-17 8 0 8 8 0 9-17 9z" fill="#7d8587" />
        <path d="M36 510l1.500 4.500L42 516l-4.500 1.500L36 522l-1.500-4.500L30 516l4.500-1.500z" fill="#fff" />
      </g>
    </svg>
  );
}

const CONTROL_BOX = "flex w-[68px] flex-col rounded border-2 border-[#d0d0d0] bg-white text-[#262626]";

function MapElement() {
  return (
    <section className="relative h-[552px]">
      <div className="absolute -inset-4 border-2 border-[#2c88b7]" />
      <div className="absolute inset-0 overflow-hidden">
        <EuropeMap />

        <div className="absolute top-8 bottom-0 left-8 flex w-[362px]">
          <div className="relative flex-1 rounded-l border-r-2 border-[#e1e3e5] bg-[#fcfcfe]/80 pt-7 pl-5">
            <span className="absolute bottom-4 left-10 font-[Inter,sans-serif] text-[28px] leading-10 font-bold text-white">mapbox</span>
            <h3 className="h-[47px] pl-2 text-[25px] leading-10 font-medium text-[#262626]">Sum of Forecast vs T…</h3>
            <div className="relative flex">
              <div className="h-[445px] w-8 bg-[linear-gradient(180deg,#8f1023,#cb2d2c_12%,#ef7148_25%,#fbb871_38%,#fade8c_47%,#f7f5a9_56%,#d3ea88_66%,#a0d36c_77%,#5bb25d_89%,#2a8d4c)]" />
              <ul className="flex flex-col pl-2.5 font-[Roboto,sans-serif] text-[20px] leading-[30px] text-[#262626]">
                <li className="h-[118px]">-0.04918</li>
                <li className="h-[118px]">-0.026283</li>
                <li className="h-[118px]">-0.003386</li>
                <li>0.019511</li>
              </ul>
            </div>
          </div>
          <div className="w-7 border-r-2 border-[#e1e3e5] bg-[#fafafa] px-[5px] pt-0.5">
            <div className="h-[435px] rounded-full bg-[#b9b9b9]" />
          </div>
        </div>

        <div className="absolute top-[208px] right-6 flex flex-col items-center">
          <div className={`h-[132px] ${CONTROL_BOX}`}>
            <button aria-label="Reset location" className="flex flex-1 items-center justify-center">
              <svg viewBox="0 0 30 40" className="h-10 w-[30px]" fill="none" stroke="currentColor" strokeWidth="2">
                <path d="M15 38L4 22Q1 17 2 14a13 13 0 0 1 26 0q1 3-2 8z" />
                <circle cx="15" cy="14" r="6" fill="currentColor" stroke="none" />
              </svg>
            </button>
            <button aria-label="Centre map" className="flex flex-1 items-center justify-center">
              <svg viewBox="0 0 40 40" className="size-10" fill="none" stroke="currentColor" strokeWidth="2">
                <circle cx="20" cy="20" r="13" />
                <circle cx="20" cy="20" r="4" fill="currentColor" stroke="none" />
                <path d="M20 0v7M20 33v7M0 20h7M33 20h7" strokeWidth="4" />
              </svg>
            </button>
          </div>
          <div className={`mt-4 h-[132px] ${CONTROL_BOX}`}>
            <button aria-label="Zoom in" className="flex flex-1 items-center justify-center">
              <svg viewBox="0 0 20 20" className="size-5" stroke="currentColor" strokeWidth="2">
                <path d="M10 0v20M0 10h20" />
              </svg>
            </button>
            <button aria-label="Zoom out" className="flex flex-1 items-center justify-center">
              <svg viewBox="0 0 20 20" className="size-5" stroke="currentColor" strokeWidth="2">
                <path d="M0 10h20" />
              </svg>
            </button>
          </div>
          <button aria-label="Map attribution" className="mt-3">
            <svg viewBox="0 0 34 34" className="size-[34px]" fill="none" stroke="#262626" strokeWidth="2">
              <circle cx="17" cy="17" r="16" />
              <path d="M17 14v13M17 7v4" strokeWidth="4" />
            </svg>
          </button>
        </div>
      </div>

      <div className="absolute -top-8 -left-4 flex h-[34px] items-center rounded-2xl bg-[#2c88b7] px-4 pb-0.5 text-[22px] leading-8 text-white">Phil Ballai</div>
      <div className="absolute -bottom-[21px] left-1/2 h-2.5 w-8 -translate-x-1/2 rounded-full border-2 border-[#2c88b7] bg-white" />

      <div className="absolute -top-[30px] -right-4 flex h-[60px] w-[196px] items-center rounded border-2 border-[#d0d0d0] bg-white pl-[22px] text-[#262626] shadow-lg">
        <button aria-label="Move">
          <svg viewBox="0 0 10 24" className="h-6 w-2.5" fill="currentColor">
            <path d="M0 0h3v3H0zM7 0h3v3H7zM0 10h3v3H0zM7 10h3v3H7zM0 20h3v3H0zM7 20h3v3H7z" />
          </svg>
        </button>
        <button aria-label="Add child element" className="ml-[18px]">
          <svg viewBox="0 0 34 32" className="h-8 w-[34px]" fill="none" stroke="currentColor" strokeWidth="2">
            <path d="M0 27h15M3 27V14h5v13M11 27V2h5v16M19 14v-4h5v2" />
            <circle cx="24" cy="23" r="8" />
            <path d="M24 18v10M19 23h10" />
          </svg>
        </button>
        <button aria-label="Maximize" className="ml-4">
          <svg viewBox="0 0 30 32" className="h-8 w-[30px]" fill="none" stroke="currentColor" strokeWidth="2">
            <path d="M18 12L29 2M20 2h9v10M12 20L1 30M1 20v10h9" />
          </svg>
        </button>
        <button aria-label="More" className="ml-8">
          <svg viewBox="0 0 4 24" className="h-6 w-1" fill="currentColor">
            <path d="M0 0h4v4H0zM0 10h4v4H0zM0 20h4v4H0z" />
          </svg>
        </button>
      </div>
    </section>
  );
}

/* ---------- page ---------- */

export default function App() {
  return (
    <div className={`flex min-h-screen flex-col bg-[#e8e8e8] py-[18px] pr-[18px] pl-[22px] ${SANS}`}>
      <div className="flex flex-1 flex-col shadow-[-3px_0_2px_#a8a8a8,0_2px_6px_#00000030]">
        <TopBar />
        <div className="flex flex-1">
          <Rail />
          <SidePanel />
          <main className="flex min-w-0 flex-1 flex-col bg-[#efefef]">
            <FormatBar />
            <div className="flex flex-1">
              <div className="grid min-w-0 flex-1 grid-cols-2 content-start gap-8 p-8">
                <ForecastCard />
                <MapElement />
              </div>
              <div className="w-[26px] border-l-2 border-[#e0e0e0] bg-[#fafafa]" />
            </div>
          </main>
        </div>
      </div>
    </div>
  );
}
